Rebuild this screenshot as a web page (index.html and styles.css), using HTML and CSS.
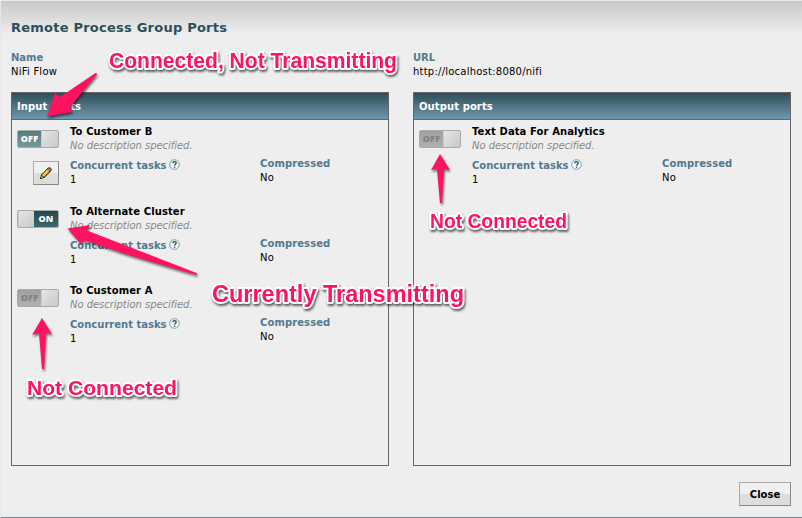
FILE: index.html
```
<!DOCTYPE html>
<html lang="en">
<head>
<meta charset="utf-8">
<title>Remote Process Group Ports</title>
<link rel="stylesheet" href="styles.css">
</head>
<body>
<svg class="defs" width="0" height="0">
  <symbol id="help" viewBox="0 0 11 11">
    <circle cx="5.5" cy="5.5" r="4.8" fill="#f4f8fa" stroke="#7d9dac" stroke-width="1"/>
    <path d="M3.8 4.1C3.9 2.1 7.3 2.1 7.2 4.1C7.2 5.2 5.6 5.2 5.6 6.6M5.6 7.5V8.7" fill="none" stroke="#264c5a" stroke-width="1.4"/>
  </symbol>
</svg>
<main class="dialog">
  <h1>Remote Process Group Ports</h1>
  <div class="columns">
    <section class="column">
      <div class="setting"><b class="label">Name</b><span class="value">NiFi Flow</span></div>
      <div class="panel">
        <h2>Input ports</h2>
        <article class="port">
          <div class="controls">
            <div class="toggle off"><span>OFF</span><i></i></div>
            <button class="edit" aria-label="Edit"><svg width="14" height="14" viewBox="0 0 14 14">
              <path d="M1 13L2 8.8L9 1.8Q10.5 .5 12 2Q13.5 3.5 12.2 5L5.2 12Z" fill="#302508"/>
              <path d="M2.9 9.2L8.5 3.6L10.4 5.5L4.8 11.1Z" fill="#f2b92d"/>
              <path d="M3.3 9.1L8.6 3.8L9.2 4.4L3.9 9.7Z" fill="#ffe36a"/>
              <path d="M9.8 2.4L10.8 1.7L12.3 3.2L11.6 4.2Z" fill="#e34845"/>
              <path d="M8.9 3.3L9.6 2.6L11.4 4.4L10.7 5.1Z" fill="#c5c5b8"/>
              <path d="M2.4 9.8L4.2 11.6L2 12Z" fill="#e6cf9e"/><path d="M1 13L1.4 11.2L2.8 12.6Z" fill="#111"/>
            </svg></button>
          </div>
          <div class="details">
            <b class="port-name">To Customer B</b><em>No description specified.</em>
            <div class="facts">
              <div class="tasks"><b class="label">Concurrent tasks<svg class="help"><use href="#help"/></svg></b><span class="value">1</span></div>
              <div class="compressed"><b class="label">Compressed</b><span class="value">No</span></div>
            </div>
          </div>
        </article>
        <article class="port">
          <div class="controls"><div class="toggle on"><i></i><span>ON</span></div></div>
          <div class="details">
            <b class="port-name">To Alternate Cluster</b><em>No description specified.</em>
            <div class="facts">
              <div class="tasks"><b class="label">Concurrent tasks<svg class="help"><use href="#help"/></svg></b><span class="value">1</span></div>
              <div class="compressed"><b class="label">Compressed</b><span class="value">No</span></div>
            </div>
          </div>
        </article>
        <article class="port">
          <div class="controls"><div class="toggle disabled"><span>OFF</span><i></i></div></div>
          <div class="details">
            <b class="port-name">To Customer A</b><em>No description specified.</em>
            <div class="facts">
              <div class="tasks"><b class="label">Concurrent tasks<svg class="help"><use href="#help"/></svg></b><span class="value">1</span></div>
              <div class="compressed"><b class="label">Compressed</b><span class="value">No</span></div>
            </div>
          </div>
        </article>
      </div>
    </section>
    <section class="column">
      <div class="setting"><b class="label">URL</b><span class="value">http://localhost:8080/nifi</span></div>
      <div class="panel">
        <h2>Output ports</h2>
        <article class="port">
          <div class="controls"><div class="toggle disabled"><span>OFF</span><i></i></div></div>
          <div class="details">
            <b class="port-name">Text Data For Analytics</b><em>No description specified.</em>
            <div class="facts">
              <div class="tasks"><b class="label">Concurrent tasks<svg class="help"><use href="#help"/></svg></b><span class="value">1</span></div>
              <div class="compressed"><b class="label">Compressed</b><span class="value">No</span></div>
            </div>
          </div>
        </article>
      </div>
    </section>
  </div>
  <footer><button class="close">Close</button></footer>
</main>
<svg class="callouts" width="802" height="518" viewBox="0 0 802 518">
  <g class="arrows">
    <path d="M95.500 73Q98 73 96.500 75L70 107L72 112L47 116.500L55 93L60 97Z"/>
    <path d="M67.500 228.500L90 225L87 230.500L196.500 273Q198 275 196 275L127 254.500L85 240.500L80 243Z"/>
    <path d="M42 318L52 334L46 333L44 369H42L39 333L32 335Z"/>
    <path d="M440 154L450 170L444 169L442 203H440L437 169L431 170Z"/>
  </g>
  <g class="notes">
    <text x="109" y="67.500" textLength="288" lengthAdjust="spacingAndGlyphs" font-size="21.500">Connected, Not Transmitting</text>
    <text x="212" y="302" textLength="252" lengthAdjust="spacingAndGlyphs" font-size="23.500">Currently Transmitting</text>
    <text x="27" y="395" textLength="150" lengthAdjust="spacingAndGlyphs" font-size="21">Not Connected</text>
    <text x="430" y="228" textLength="137" lengthAdjust="spacingAndGlyphs" font-size="19.500">Not Connected</text>
  </g>
</svg>
</body>
</html>
```
FILE: styles.css
```
* { box-sizing: border-box; }
body { margin: 0; font: 10px/14px Verdana, "DejaVu Sans", sans-serif; color: #000; }
.defs { position: absolute; }
.dialog {
  display: flex; flex-direction: column;
  width: 802px; height: 518px; padding: 19px 11px 11px 10px;
  border: solid #e8e8e8; border-width: 1px 0 0 1px; border-bottom: 1px solid #7a8990;
  background: linear-gradient(#c9c9c9, #eee 34px);
}
h1 { margin: 0 0 15px; font-size: 13px; line-height: 16px; color: #2c4f5d; letter-spacing: .23px; }
.columns { display: flex; gap: 24px; }
.column { width: 378px; }
.setting { height: 41px; }
.label, .value, .port-name, em { display: block; white-space: nowrap; }
.label { height: 14px; color: #527991; }
.value { letter-spacing: .23px; }
.panel { height: 374px; border: 1px solid #666; }
h2 { margin: 0 0 5px; height: 27px; padding-left: 5px; font-size: 10px; line-height: 27px; letter-spacing: .1px; color: #fff; border-bottom: 1px solid #666; background: linear-gradient(#2e4d58, #7098ae); }
.port { display: flex; height: 80px; padding-left: 5px; }
.port + .port { height: 79px; }
.controls { width: 53px; padding-top: 5px; }
.toggle { display: flex; width: 42px; height: 18px; border: 1px solid #a4adad; border-radius: 2px; overflow: hidden; font: 800 9px/16px "Open Sans", sans-serif; letter-spacing: .2px; color: #fff; text-align: center; }
.toggle span { flex: 1; }
.toggle i { width: 17px; background: linear-gradient(135deg, #e5e5e5, #c8c8c8); border-left: 1px solid #ccc; }
.toggle.on i { width: 16px; }
.off { background: linear-gradient(#577b80, #78999b); }
.on { background: linear-gradient(#24474e, #3d6a70); }
.disabled { background: linear-gradient(#a0a0a0, #b0b0b0); color: #818181; border-color: #aaa; }
.edit { display: flex; align-items: center; justify-content: center; width: 26px; height: 24px; margin: 13px 0 0 16px; padding: 0; }
.edit, .close { border: 1px solid #aaa; border-right-color: #888; border-bottom-color: #888; background: linear-gradient(#f0f0f0 50%, #ddd 50%); }
.details { flex: 1; }
.port-name { letter-spacing: .1px; }
em { color: #888; letter-spacing: -.04px; }
.facts { display: flex; padding-top: 4px; }
.tasks { width: 190px; padding-top: 2px; }
.compressed .label { letter-spacing: .1px; }
.help { width: 11px; height: 11px; margin-left: 3px; vertical-align: -1px; overflow: visible; }
footer { display: flex; justify-content: flex-end; padding-top: 16px; }
.close { width: 52px; height: 24px; padding: 0; font: bold 10px "DejaVu Sans", sans-serif; color: #000; }
.callouts { position: absolute; left: 0; top: 0; pointer-events: none; }
.arrows { fill: #ff1260; filter: drop-shadow(1px 2px 1px #0008); }
.notes { font-family: "Liberation Sans", sans-serif; font-weight: bold; fill: #ff1260; stroke: #fff; stroke-width: 4px; stroke-linejoin: round; paint-order: stroke; filter: drop-shadow(1px 2px 1px #0009); }
```
